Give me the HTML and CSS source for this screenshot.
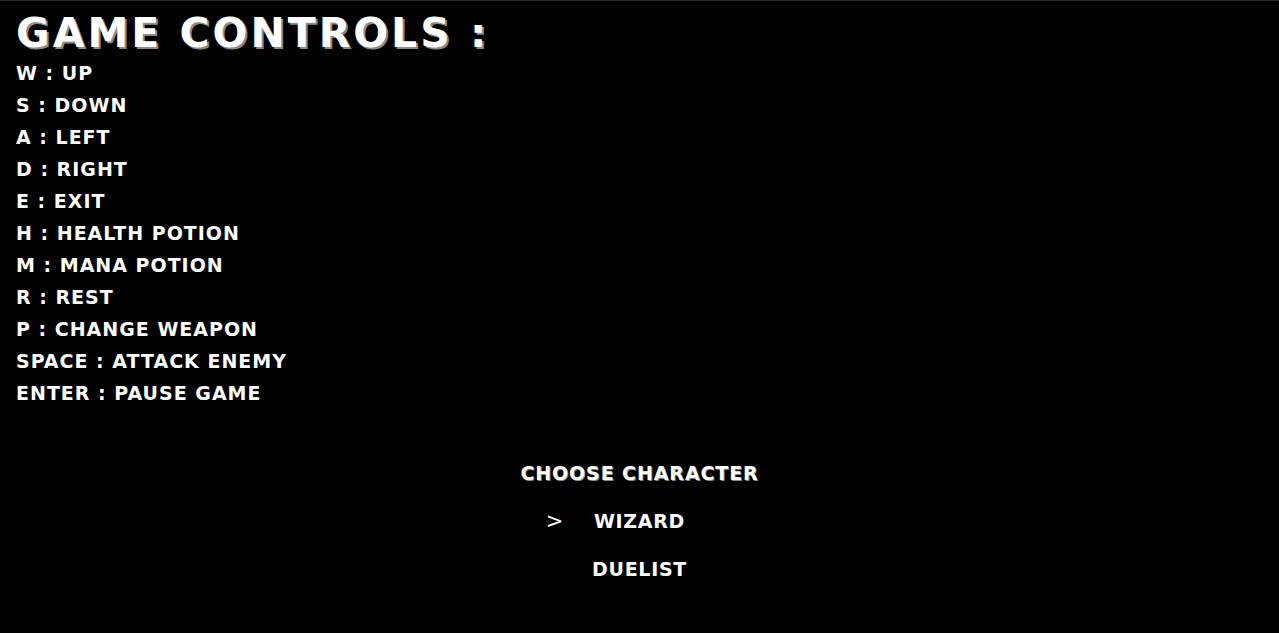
FILE: index.html
```html
<!DOCTYPE html>
<html>
<head>
<meta charset="utf-8">
<link rel="stylesheet" href="styles.css">
</head>
<body>
<div class="screen">
  <h1 class="title">GAME CONTROLS :</h1>
  <ul class="controls">
    <li>W : UP</li>
    <li>S : DOWN</li>
    <li>A : LEFT</li>
    <li>D : RIGHT</li>
    <li>E : EXIT</li>
    <li>H : HEALTH POTION</li>
    <li>M : MANA POTION</li>
    <li>R : REST</li>
    <li>P : CHANGE WEAPON</li>
    <li>SPACE : ATTACK ENEMY</li>
    <li>ENTER : PAUSE GAME</li>
  </ul>
  <div class="menu">
    <div class="menu-title">CHOOSE CHARACTER</div>
    <div class="option selected"><span class="cursor">&gt;</span><span class="label">WIZARD</span></div>
    <div class="option"><span class="label">DUELIST</span></div>
  </div>
</div>
</body>
</html>
```
FILE: styles.css
```css
html, body {
  margin: 0;
  padding: 0;
  background: #000;
}
body {
  width: 1279px;
  height: 633px;
  overflow: hidden;
  font-family: "DejaVu Sans", sans-serif;
  font-weight: bold;
  color: #fff;
  -webkit-font-smoothing: none;
}
.screen {
  border-top: 1px solid #2e2e2e;
  padding: 0 16px;
  height: 632px;
  box-sizing: border-box;
}
.title {
  margin: 0;
  padding-top: 8px;
  font-size: 41px;
  line-height: 48px;
  font-weight: bold;
  letter-spacing: 3px;
  text-shadow: 2px 2px 0 #8a8a8a;
}
.controls {
  list-style: none;
  margin: 0;
  padding: 0;
}
.controls li {
  font-size: 19px;
  line-height: 32px;
  height: 32px;
  letter-spacing: 1px;
}
.menu {
  display: flex;
  flex-direction: column;
  align-items: center;
  margin-top: 40px;
}
.menu-title {
  font-size: 19px;
  line-height: 48px;
  letter-spacing: 0.9px;
  text-shadow: 1px 1px 0 #8a8a8a;
}
.option {
  position: relative;
  font-size: 19px;
  line-height: 48px;
  letter-spacing: 0.7px;
}
.cursor {
  position: absolute;
  right: 100%;
  margin-right: 30px;
  font-weight: normal;
  font-size: 21px;
}
```
